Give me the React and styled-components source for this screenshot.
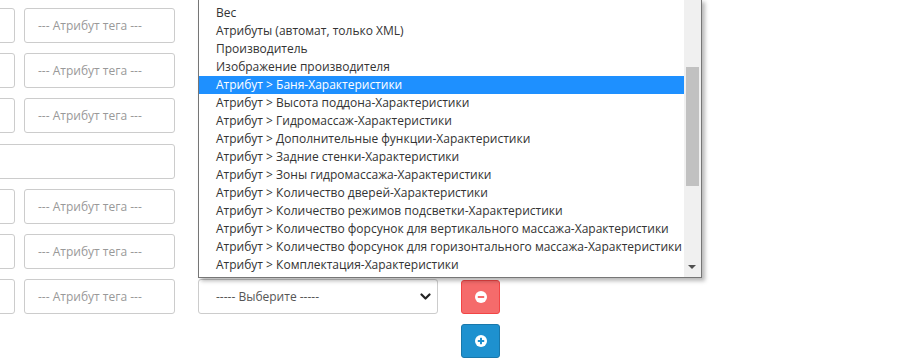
import React from "react";
import styled, { createGlobalStyle } from "styled-components";

const Global = createGlobalStyle`
  html, body { margin: 0; padding: 0; background: #fff; }
  body { font-family: "Open Sans", "Noto Sans", sans-serif; font-size: 12px; color: #333; overflow: hidden; }
  * { box-sizing: border-box; }
`;

const Page = styled.div`
  position: relative;
  width: 898px;
  height: 364px;
  overflow: hidden;
`;

const Table = styled.div`
  display: flex;
  flex-direction: column;
  gap: 10px;
  padding-top: 8px;
  margin-left: -136px;
`;

const Row = styled.div`
  display: grid;
  grid-template-columns: 311px 240px 39px;
  column-gap: 23px;
  align-items: start;
  margin-top: ${(p) => (p.$shift ? "1px" : "0")};
`;

const Pair = styled.div`
  display: flex;
  gap: 9px;
`;

const TextBox = styled.div`
  flex: ${(p) => (p.$wide ? "1 1 auto" : "0 0 151px")};
  height: 35px;
  border: 1px solid #ccc;
  border-radius: 3px;
  background: #fff;
  color: #999;
  display: flex;
  align-items: center;
  padding-left: 13px;
  font-size: 12px;
  white-space: nowrap;
`;

const SelectBox = styled.div`
  height: 35px;
  border: 1px solid #ccc;
  border-radius: 3px;
  background: #fff;
  color: #555;
  display: flex;
  align-items: center;
  justify-content: space-between;
  padding: 0 6px 0 17px;
  white-space: nowrap;
`;

const ActionButton = styled.div`
  grid-column: ${(p) => p.$col || "auto"};
  width: 39px;
  height: 34px;
  margin-top: ${(p) => (p.$col ? "0" : "1px")};
  border-radius: 3px;
  border: 1px solid ${(p) => (p.$danger ? "#f24545" : "#1978ab")};
  background: ${(p) => (p.$danger ? "#f56b6b" : "#1e91cf")};
  display: flex;
  align-items: center;
  justify-content: center;
`;

const Popup = styled.div`
  position: absolute;
  left: 198px;
  top: -1px;
  width: 504px;
  height: 279px;
  border: 1px solid #767676;
  background: #fff;
  box-shadow: 3px 3px 4px rgba(0, 0, 0, 0.28);
  display: flex;
  z-index: 5;
`;

const OptionList = styled.div`
  flex: 1 1 auto;
  padding: 4px 0 3px;
  overflow: hidden;
`;

const Option = styled.div`
  height: 18px;
  line-height: 18px;
  padding-left: 17px;
  white-space: nowrap;
  color: ${(p) => (p.$active ? "#fff" : "#333")};
  background: ${(p) => (p.$active ? "#1e90ff" : "transparent")};
`;

const ScrollTrack = styled.div`
  position: relative;
  flex: 0 0 17px;
  background: #f0f0f0;
`;

const ScrollThumb = styled.div`
  position: absolute;
  left: 2px;
  right: 2px;
  top: 67px;
  height: 119px;
  background: #c1c1c1;
`;

const ScrollArrow = styled.div`
  position: absolute;
  left: 4px;
  bottom: 8px;
  width: 0;
  height: 0;
  border-left: 4px solid transparent;
  border-right: 4px solid transparent;
  border-top: 4px solid #505050;
`;

const options = [
  "Вес",
  "Атрибуты (автомат, только XML)",
  "Производитель",
  "Изображение производителя",
  "Атрибут > Баня-Характеристики",
  "Атрибут > Высота поддона-Характеристики",
  "Атрибут > Гидромассаж-Характеристики",
  "Атрибут > Дополнительные функции-Характеристики",
  "Атрибут > Задние стенки-Характеристики",
  "Атрибут > Зоны гидромассажа-Характеристики",
  "Атрибут > Количество дверей-Характеристики",
  "Атрибут > Количество режимов подсветки-Характеристики",
  "Атрибут > Количество форсунок для вертикального массажа-Характеристики",
  "Атрибут > Количество форсунок для горизонтального массажа-Характеристики",
  "Атрибут > Комплектация-Характеристики",
];

const Chevron = () => (
  <svg width="11" height="8" viewBox="0 0 11 8">
    <path d="M1.5 1.5 L5.5 5.5 L9.5 1.5" fill="none" stroke="#222" strokeWidth="2.2" strokeLinecap="round" strokeLinejoin="round" />
  </svg>
);

const CircleIcon = ({ plus, color }) => (
  <svg width="12" height="12" viewBox="0 0 12 12">
    <circle cx="6" cy="6" r="6" fill="#fff" />
    <rect x="2.8" y="5" width="6.4" height="2" fill={color} />
    {plus && <rect x="5" y="2.8" width="2" height="6.4" fill={color} />}
  </svg>
);

const TAG = "--- Атрибут тега ---";

export default function App() {
  const rows = [0, 1, 2, "wide", 4, 5, 6];
  return (
    <Page>
      <Global />
      <Table>
        {rows.map((r, i) =>
          r === "wide" ? (
            <Row key={i} $shift>
              <Pair>
                <TextBox $wide />
              </Pair>
            </Row>
          ) : (
            <Row key={i}>
              <Pair>
                <TextBox />
                <TextBox>{TAG}</TextBox>
              </Pair>
              <SelectBox>
                ----- Выберите -----
                <Chevron />
              </SelectBox>
              <ActionButton $danger>
                <CircleIcon color="#f56b6b" />
              </ActionButton>
            </Row>
          )
        )}
        <Row>
          <ActionButton $col={3}>
            <CircleIcon plus color="#1e91cf" />
          </ActionButton>
        </Row>
      </Table>
      <Popup>
        <OptionList>
          {options.map((o, i) => (
            <Option key={i} $active={i === 4}>
              {o}
            </Option>
          ))}
        </OptionList>
        <ScrollTrack>
          <ScrollThumb />
          <ScrollArrow />
        </ScrollTrack>
      </Popup>
    </Page>
  );
}
